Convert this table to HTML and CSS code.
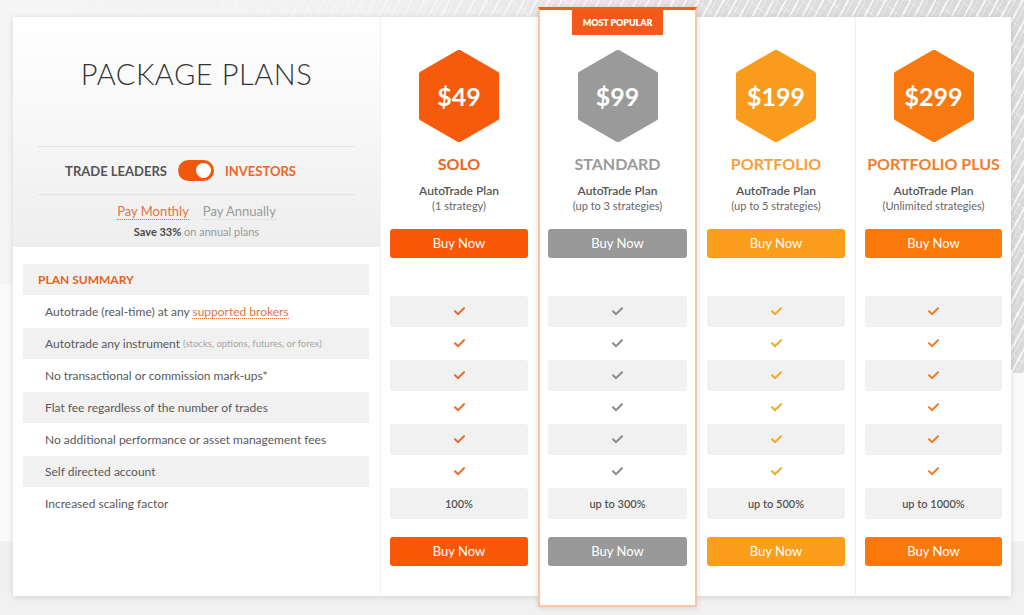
FILE: index.html
```html
<!DOCTYPE html>
<html lang="en">
<head>
<meta charset="utf-8">
<title>Package Plans</title>
<link rel="stylesheet" href="styles.css">
</head>
<body>
<main class="pricing">
  <section class="features">
    <div class="intro">
      <h1 class="title">PACKAGE PLANS</h1>
      <div class="audience">
        <span class="aud-label">TRADE LEADERS</span>
        <span class="switch"><span class="knob"></span></span>
        <span class="aud-label active">INVESTORS</span>
      </div>
      <div class="billing">
        <span class="bill active">Pay Monthly</span>
        <span class="bill">Pay Annually</span>
      </div>
      <p class="save"><b>Save 33%</b> on annual plans</p>
    </div>
    <ul class="rows">
      <li class="row head">PLAN SUMMARY</li>
      <li class="row">Autotrade (real-time) at any&nbsp;<a class="link">supported brokers</a></li>
      <li class="row">Autotrade any instrument&nbsp;<small>(stocks, options, futures, or forex)</small></li>
      <li class="row">No transactional or commission mark-ups*</li>
      <li class="row">Flat fee regardless of the number of trades</li>
      <li class="row">No additional performance or asset management fees</li>
      <li class="row">Self directed account</li>
      <li class="row">Increased scaling factor</li>
    </ul>
  </section>

  <section class="plan solo">
    <div class="hex"><svg viewBox="0 0 80 92"><polygon points="40,4 76.37,25 76.37,67 40,88 3.63,67 3.63,25"/></svg><span class="price">$49</span></div>
    <h2 class="name">SOLO</h2>
    <p class="desc"><b>AutoTrade Plan</b><br>(1 strategy)</p>
    <a class="buy">Buy Now</a>
    <ul class="cells">
      <li></li>
      <li><svg class="check" viewBox="0 0 11 9"><polyline points="1,4.2 4,7.2 10,1.2"/></svg></li>
      <li><svg class="check" viewBox="0 0 11 9"><polyline points="1,4.2 4,7.2 10,1.2"/></svg></li>
      <li><svg class="check" viewBox="0 0 11 9"><polyline points="1,4.2 4,7.2 10,1.2"/></svg></li>
      <li><svg class="check" viewBox="0 0 11 9"><polyline points="1,4.2 4,7.2 10,1.2"/></svg></li>
      <li><svg class="check" viewBox="0 0 11 9"><polyline points="1,4.2 4,7.2 10,1.2"/></svg></li>
      <li><svg class="check" viewBox="0 0 11 9"><polyline points="1,4.2 4,7.2 10,1.2"/></svg></li>
      <li>100%</li>
    </ul>
    <a class="buy">Buy Now</a>
  </section>

  <section class="plan standard featured">
    <div class="badge">MOST POPULAR</div>
    <div class="hex"><svg viewBox="0 0 80 92"><polygon points="40,4 76.37,25 76.37,67 40,88 3.63,67 3.63,25"/></svg><span class="price">$99</span></div>
    <h2 class="name">STANDARD</h2>
    <p class="desc"><b>AutoTrade Plan</b><br>(up to 3 strategies)</p>
    <a class="buy">Buy Now</a>
    <ul class="cells">
      <li></li>
      <li><svg class="check" viewBox="0 0 11 9"><polyline points="1,4.2 4,7.2 10,1.2"/></svg></li>
      <li><svg class="check" viewBox="0 0 11 9"><polyline points="1,4.2 4,7.2 10,1.2"/></svg></li>
      <li><svg class="check" viewBox="0 0 11 9"><polyline points="1,4.2 4,7.2 10,1.2"/></svg></li>
      <li><svg class="check" viewBox="0 0 11 9"><polyline points="1,4.2 4,7.2 10,1.2"/></svg></li>
      <li><svg class="check" viewBox="0 0 11 9"><polyline points="1,4.2 4,7.2 10,1.2"/></svg></li>
      <li><svg class="check" viewBox="0 0 11 9"><polyline points="1,4.2 4,7.2 10,1.2"/></svg></li>
      <li>up to 300%</li>
    </ul>
    <a class="buy">Buy Now</a>
  </section>

  <section class="plan portfolio">
    <div class="hex"><svg viewBox="0 0 80 92"><polygon points="40,4 76.37,25 76.37,67 40,88 3.63,67 3.63,25"/></svg><span class="price">$199</span></div>
    <h2 class="name">PORTFOLIO</h2>
    <p class="desc"><b>AutoTrade Plan</b><br>(up to 5 strategies)</p>
    <a class="buy">Buy Now</a>
    <ul class="cells">
      <li></li>
      <li><svg class="check" viewBox="0 0 11 9"><polyline points="1,4.2 4,7.2 10,1.2"/></svg></li>
      <li><svg class="check" viewBox="0 0 11 9"><polyline points="1,4.2 4,7.2 10,1.2"/></svg></li>
      <li><svg class="check" viewBox="0 0 11 9"><polyline points="1,4.2 4,7.2 10,1.2"/></svg></li>
      <li><svg class="check" viewBox="0 0 11 9"><polyline points="1,4.2 4,7.2 10,1.2"/></svg></li>
      <li><svg class="check" viewBox="0 0 11 9"><polyline points="1,4.2 4,7.2 10,1.2"/></svg></li>
      <li><svg class="check" viewBox="0 0 11 9"><polyline points="1,4.2 4,7.2 10,1.2"/></svg></li>
      <li>up to 500%</li>
    </ul>
    <a class="buy">Buy Now</a>
  </section>

  <section class="plan plus">
    <div class="hex"><svg viewBox="0 0 80 92"><polygon points="40,4 76.37,25 76.37,67 40,88 3.63,67 3.63,25"/></svg><span class="price">$299</span></div>
    <h2 class="name">PORTFOLIO PLUS</h2>
    <p class="desc"><b>AutoTrade Plan</b><br>(Unlimited strategies)</p>
    <a class="buy">Buy Now</a>
    <ul class="cells">
      <li></li>
      <li><svg class="check" viewBox="0 0 11 9"><polyline points="1,4.2 4,7.2 10,1.2"/></svg></li>
      <li><svg class="check" viewBox="0 0 11 9"><polyline points="1,4.2 4,7.2 10,1.2"/></svg></li>
      <li><svg class="check" viewBox="0 0 11 9"><polyline points="1,4.2 4,7.2 10,1.2"/></svg></li>
      <li><svg class="check" viewBox="0 0 11 9"><polyline points="1,4.2 4,7.2 10,1.2"/></svg></li>
      <li><svg class="check" viewBox="0 0 11 9"><polyline points="1,4.2 4,7.2 10,1.2"/></svg></li>
      <li><svg class="check" viewBox="0 0 11 9"><polyline points="1,4.2 4,7.2 10,1.2"/></svg></li>
      <li>up to 1000%</li>
    </ul>
    <a class="buy">Buy Now</a>
  </section>
</main>
</body>
</html>
```

FILE: styles.css
```css
* { box-sizing: border-box; }

html { height: 100%; }

body {
  margin: 0;
  height: 100%;
  padding: 17px 13px 0 13px;
  overflow: hidden;
  font-family: Lato, "Open Sans", sans-serif;
  color: #555;
  background:
    linear-gradient(to bottom, transparent 541px, #f1f1f1 541px),
    linear-gradient(185deg, transparent 372px, #fafafa 372px),
    linear-gradient(to right, #f5f5f5 0%, rgba(245,245,245,.85) 35%, rgba(245,245,245,.2) 70%, rgba(245,245,245,0) 100%),
    repeating-linear-gradient(118deg, rgba(255,255,255,.75) 0 2px, transparent 2px 5px, rgba(255,255,255,.4) 5px 6px, transparent 6px 11px),
    repeating-linear-gradient(40deg, rgba(255,255,255,.35) 0 1px, transparent 1px 17px),
    #d9d9d9;
}

.pricing {
  display: grid;
  grid-template-columns: 367px 158px 159px 158px 156px;
  width: 998px;
  background: #fff;
  box-shadow: 0 1px 6px rgba(0,0,0,.13);
}

/* ---------- left column ---------- */
.intro {
  height: 230px;
  padding: 40px 25px 0;
  background: linear-gradient(to bottom, #ffffff 0%, #f6f6f6 55%, #eeeeee 100%);
  text-align: center;
}

.title {
  margin: 0;
  font-size: 29px;
  line-height: 34px;
  font-weight: 300;
  color: #333;
  letter-spacing: 0.55px;
}

.audience {
  margin-top: 55px;
  height: 49px;
  padding-right: 32px;
  border-top: 1px solid #e3e3e3;
  border-bottom: 1px solid #e3e3e3;
  display: flex;
  align-items: center;
  justify-content: center;
  gap: 11px;
}

.aud-label {
  font-size: 13px;
  font-weight: 700;
  color: #555;
}

.aud-label.active { color: #f26522; }

.switch {
  width: 36px;
  height: 21px;
  border-radius: 11px;
  background: #f0580e;
  display: flex;
  align-items: center;
  justify-content: flex-end;
  padding-right: 3px;
}

.knob {
  width: 15px;
  height: 15px;
  border-radius: 50%;
  background: #fff;
}

.billing {
  margin-top: 8px;
  display: flex;
  justify-content: center;
  gap: 14px;
  font-size: 13px;
  line-height: 18px;
}

.bill {
  color: #9a9a9a;
  border-bottom: 1px dotted #d5d5d5;
  line-height: 16px;
}

.bill.active {
  color: #e8733a;
  border-bottom-color: #e8733a;
}

.save {
  margin: 5px 0 0;
  font-size: 11px;
  line-height: 14px;
  color: #999;
}

.save b { color: #4a4a4a; }

.rows {
  list-style: none;
  margin: 17px 11px 0 10px;
  padding: 0;
}

.row {
  height: 31px;
  margin-bottom: 1px;
  border-radius: 3px;
  display: flex;
  align-items: center;
  padding-left: 22px;
  font-size: 12px;
  color: #595959;
  white-space: nowrap;
}

.row:nth-child(odd) { background: #f1f1f1; }

.row.head {
  padding-left: 15px;
  font-weight: 700;
  color: #e8611a;
}

.row small {
  font-size: 9.5px;
  color: #a5a5a5;
}

.link {
  color: #e8733a;
  border-bottom: 1px dotted #e8733a;
  line-height: 13px;
}

/* ---------- plan columns ---------- */
.plan {
  padding: 33px 10px 30px;
  text-align: center;
  --c: #f65a0b;
  --name: #ed6322;
  --btn: #fa5707;
  --check: #ee6629;
}

.solo { border-left: 1px dotted #e4e4e4; padding-left: 9px; }

.standard { --c: #9a9a9a; --name: #9a9a9a; --btn: #999; --check: #8a8a8a; }

.portfolio { --c: #f99b1d; --name: #f5a03c; --btn: #fa9e1c; --check: #f5a425; }

.plus { --c: #f77a10; --name: #f07d2c; --btn: #fb790a; --check: #f07a2c; border-left: 1px solid #eee; padding-left: 9px; padding-right: 9px; }

.featured {
  margin: -10px 0 -11px;
  padding: 0 8px 30px;
  border: 2px solid #fac4a6;
  border-top: 3px solid #f25e1a;
  background: #fff;
  box-shadow: 0 1px 6px rgba(0,0,0,.12);
  position: relative;
  z-index: 1;
}

.badge {
  width: 91px;
  height: 25px;
  margin: 0 auto 15px;
  background: #f3591a;
  color: #fff;
  font-size: 9px;
  font-weight: 800;
  line-height: 25px;
  letter-spacing: -0.1px;
}

.hex {
  width: 80px;
  height: 92px;
  margin: 0 auto;
  display: grid;
  place-items: center;
}

.hex svg, .hex .price { grid-area: 1 / 1; }

.hex svg {
  width: 80px;
  height: 92px;
  display: block;
}

.hex polygon {
  fill: var(--c);
  stroke: var(--c);
  stroke-width: 8;
  stroke-linejoin: round;
}

.price {
  color: #fff;
  font-size: 25px;
  font-weight: 700;
  line-height: 30px;
}

.name {
  margin: 12px 0 0;
  font-size: 16px;
  line-height: 20px;
  font-weight: 700;
  color: var(--name);
  white-space: nowrap;
}

.desc {
  margin: 9px 0 0;
  font-size: 11px;
  line-height: 15px;
  color: #666;
}

.desc b {
  font-size: 12px;
  font-weight: 600;
  color: #555;
}

.buy {
  display: block;
  height: 29px;
  margin-top: 16px;
  border-radius: 3px;
  background: var(--btn);
  color: #fff;
  font-size: 13px;
  line-height: 29px;
}

.cells {
  list-style: none;
  margin: 6px 0 0;
  padding: 0;
}

.cells li {
  height: 31px;
  margin-bottom: 1px;
  border-radius: 3px;
  display: flex;
  align-items: center;
  justify-content: center;
  font-size: 11px;
  font-weight: 600;
  color: #555;
}

.cells li:nth-child(even) { background: #f1f1f1; }

.cells + .buy { margin-top: 18px; }

.check {
  width: 11px;
  height: 9px;
  fill: none;
  stroke: var(--check);
  stroke-width: 2;
  stroke-linecap: round;
}
```
